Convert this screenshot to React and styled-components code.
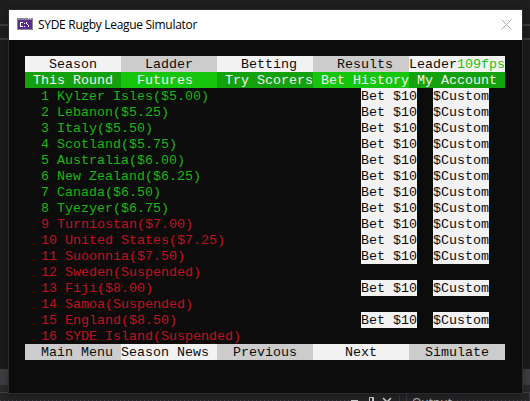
import React from "react";
import styled, { createGlobalStyle } from "styled-components";

const GlobalStyle = createGlobalStyle`
  * { box-sizing: border-box; }
  body { margin: 0; background: #1e1e1e; overflow: hidden; }
`;

const Desktop = styled.div`
  position: relative;
  display: flex;
  flex-direction: column;
  width: 530px;
  height: 401px;
  overflow: hidden;
  background: #1e1e1e;
`;

const EditorTop = styled.div`
  height: 40px;
  padding-top: 24px;
`;

const EditorRules = styled.div`
  height: 16px;
  border-top: 2px solid #3a3a3c;
  border-bottom: 2px solid #3a3a3c;
`;

const EditorBody = styled.div`
  height: 329px;
  background: #1b1b1b;
`;

const ScrollTrack = styled.div`
  height: 16px;
  background: #3e3e42;
`;

const StatusGap = styled.div`
  height: 8px;
  background: #29292c;
  border-bottom: 1px solid #434346;
`;

const DockBar = styled.div`
  display: flex;
  height: 8px;
  overflow: hidden;
  background: #252527;
`;

const DockPane = styled.div`
  display: flex;
  width: ${(p) => p.$width}px;
  padding-left: ${(p) => p.$pad || 0}px;
  border-right: 1px solid #3a3a3d;
`;

const Grip = styled.div`
  flex: 1;
  height: 1px;
  margin-top: 7px;
  background: repeating-linear-gradient(90deg, #46464a 0 1px, transparent 1px 4px);
`;

const DockIcons = styled.svg`
  flex: none;
  width: 49px;
  height: 8px;
`;

const DockTitle = styled.span`
  font: 12px/14px "Open Sans", sans-serif;
  color: #b8b8b8;
  margin: 3px 5px 0 0;
`;

const Window = styled.section`
  position: absolute;
  left: 8px;
  top: 9px;
  width: 515px;
  height: 385px;
  display: flex;
  flex-direction: column;
  border: 1px solid #2b2b2b;
  background: #0c0c0c;
  box-shadow: 0 2px 8px rgba(0, 0, 0, 0.3);
`;

const TitleBar = styled.header`
  display: flex;
  align-items: center;
  height: 30px;
  padding: 0 10px 0 8px;
  background: #fff;
`;

const ConsoleIcon = styled.svg`
  width: 16px;
  height: 12px;
  margin-top: -2px;
`;

const Title = styled.h1`
  flex: 1;
  margin: 0 0 0 5px;
  font: 12px/16px "Open Sans", sans-serif;
  letter-spacing: -0.3px;
  color: #000;
`;

const CloseIcon = styled.svg`
  width: 11px;
  height: 11px;
  margin-top: -2px;
`;

const Console = styled.main`
  width: 480px;
  margin: 16px 0 0 16px;
  font: 13.33px/18px "Courier New", "Liberation Mono", monospace;
  white-space: pre;
`;

const Row = styled.div`
  display: flex;
  height: 16px;
`;

const tones = {
  light: "background: #f2f2f2; color: #0c0c0c;",
  grey: "background: #cccccc; color: #0c0c0c;",
  green: "background: #13a10e; color: #f2f2f2;",
  lime: "background: #16c60c; color: #f2f2f2;",
};

const Cell = styled.div`
  width: 96px;
  height: 16px;
  ${(p) => tones[p.$tone]}
`;

const Fps = styled.span`
  color: #16c60c;
`;

const Team = styled.div`
  width: 320px;
  margin-left: 16px;
  color: ${(p) => (p.$out ? "#c50f1f" : "#16b80c")};
`;

const Bet = styled.div`
  width: 56px;
  height: 16px;
  margin-right: 16px;
  background: #f2f2f2;
  color: #0c0c0c;
`;

const teams = [
  ["Kylzer Isles", "$5.00"],
  ["Lebanon", "$5.25"],
  ["Italy", "$5.50"],
  ["Scotland", "$5.75"],
  ["Australia", "$6.00"],
  ["New Zealand", "$6.25"],
  ["Canada", "$6.50"],
  ["Tyezyer", "$6.75"],
  ["Turniostan", "$7.00"],
  ["United States", "$7.25"],
  ["Suoonnia", "$7.50"],
  ["Sweden", null],
  ["Fiji", "$8.00"],
  ["Samoa", null],
  ["England", "$8.50"],
  ["SYDE Island", null],
];

function Menu({ items, tones: pair }) {
  return (
    <Row>
      {items.map((label, i) => (
        <Cell key={label} $tone={pair[i % 2]}>
          {label}
          {label === "Leader" && <Fps>109fps</Fps>}
        </Cell>
      ))}
    </Row>
  );
}

export default function App() {
  return (
    <>
      <GlobalStyle />
      <Desktop>
        <EditorTop>
          <EditorRules />
        </EditorTop>
        <EditorBody />
        <ScrollTrack />
        <StatusGap />
        <DockBar>
          <DockPane $width={400}>
            <Grip />
            <DockIcons viewBox="0 0 49 8" shapeRendering="crispEdges">
              <path d="M1 7h7v1h-7z M19 4h5v4h-1v-3h-3v3h-1z M22 5h1v3h-1z" fill="#d0d0d0" />
              <path d="M33 5l4 4M41 5l-4 4" stroke="#d0d0d0" strokeWidth="1.6" shapeRendering="auto" />
            </DockIcons>
          </DockPane>
          <DockPane $width={7} />
          <DockPane $width={123} $pad={5}>
            <DockTitle>Output</DockTitle>
            <Grip />
          </DockPane>
        </DockBar>
        <Window>
          <TitleBar>
            <ConsoleIcon viewBox="0 0 16 12" shapeRendering="crispEdges">
              <path fill="#8b8994" d="M0 0h16v12H0z" />
              <path fill="#5c2d91" d="M1 2h14v9H1z" />
              <path fill="#e8e4ee" d="M11 0h1v1h-1z M13 0h1v1h-1z" />
              <path
                fill="#fff"
                d="M3 4h3v1H3z M3 5h1v3H3z M3 8h3v1H3z M7 5h1v1H7z M7 8h1v1H7z M9 4h1v2H9z M10 6h1v1h-1z M11 7h1v2h-1z"
              />
            </ConsoleIcon>
            <Title>SYDE Rugby League Simulator</Title>
            <CloseIcon viewBox="0 0 11 11">
              <path d="M.5.5l10 10M10.5.5l-10 10" stroke="#aaa" strokeWidth="1" />
            </CloseIcon>
          </TitleBar>
          <Console>
            <Menu
              tones={["light", "grey"]}
              items={["   Season", "   Ladder", "   Betting", "   Results", "Leader"]}
            />
            <Menu
              tones={["green", "lime"]}
              items={[" This Round", "  Futures", " Try Scorers", " Bet History", " My Account"]}
            />
            {teams.map(([name, odds], i) => (
              <Row key={name}>
                <Team $out={i >= 8}>{`${i + 1} ${name}(${odds || "Suspended"})`}</Team>
                {odds && (
                  <>
                    <Bet>Bet $10</Bet>
                    <Bet>$Custom</Bet>
                  </>
                )}
              </Row>
            ))}
            <Menu
              tones={["grey", "light"]}
              items={["  Main Menu", "Season News", "  Previous", "    Next", "  Simulate"]}
            />
          </Console>
        </Window>
      </Desktop>
    </>
  );
}
